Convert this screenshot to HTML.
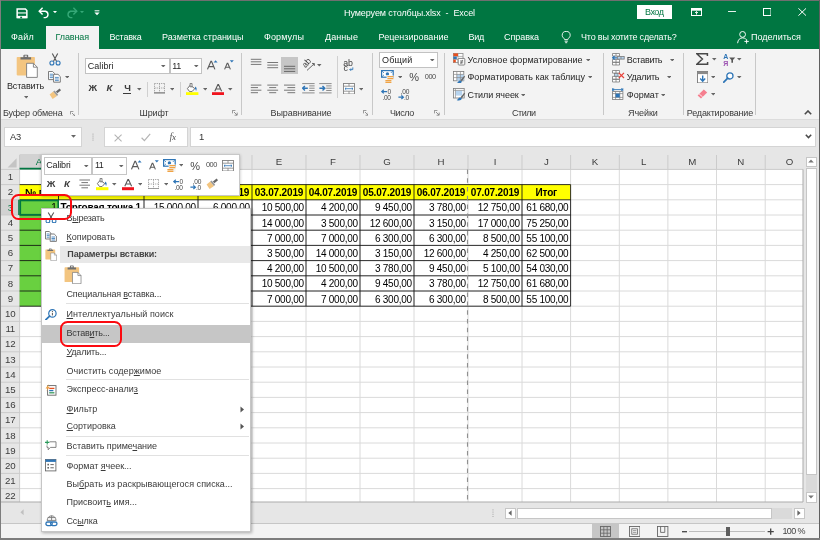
<!DOCTYPE html>
<html lang="ru"><head><meta charset="utf-8"><title>Нумеруем столбцы.xlsx - Excel</title>
<style>
html,body{margin:0;padding:0}
body{width:820px;height:540px;overflow:hidden;position:relative;background:#e6e6e6;font-family:"Liberation Sans","DejaVu Sans",sans-serif;font-size:9px}
div,span,svg{position:absolute;display:block;box-sizing:border-box}
span{white-space:nowrap}
u{text-decoration:underline;text-underline-offset:1px}
#wrap{left:0;top:0;width:820px;height:540px;will-change:transform}
</style></head><body><div id="wrap">
<div style="left:0px;top:0px;width:820px;height:49px;background:#007641;"></div>
<span style="top:6.67px;font-size:9px;color:#fff;line-height:12px;left:344px;letter-spacing:-0.085px;">Нумеруем столбцы.xlsx<i style="font-style:normal;word-spacing:2.5px"> - </i>Excel</span>
<div style="left:636.5px;top:4.5px;width:35.5px;height:14.5px;background:#fff;"></div>
<span style="top:5.57px;font-size:9px;color:#007641;line-height:12px;left:645px;letter-spacing:-0.465px;">Вход</span>
<div style="left:46px;top:26px;width:52.5px;height:23px;background:#f3f3f3;"></div>
<span style="top:31.17px;font-size:9px;color:#fff;line-height:12px;left:11px;letter-spacing:0.218px;">Файл</span>
<span style="top:31.17px;font-size:9px;color:#007641;line-height:12px;left:55.5px;letter-spacing:-0.108px;">Главная</span>
<span style="top:31.17px;font-size:9px;color:#fff;line-height:12px;left:109.5px;letter-spacing:-0.207px;">Вставка</span>
<span style="top:31.17px;font-size:9px;color:#fff;line-height:12px;left:162px;letter-spacing:-0.009px;">Разметка страницы</span>
<span style="top:31.17px;font-size:9px;color:#fff;line-height:12px;left:264px;letter-spacing:0.119px;">Формулы</span>
<span style="top:31.17px;font-size:9px;color:#fff;line-height:12px;left:325px;letter-spacing:0.081px;">Данные</span>
<span style="top:31.17px;font-size:9px;color:#fff;line-height:12px;left:378.5px;letter-spacing:0.036px;">Рецензирование</span>
<span style="top:31.17px;font-size:9px;color:#fff;line-height:12px;left:468.5px;letter-spacing:-0.261px;">Вид</span>
<span style="top:31.17px;font-size:9px;color:#fff;line-height:12px;left:504px;letter-spacing:-0.044px;">Справка</span>
<span style="top:31.17px;font-size:9px;color:#fff;line-height:12px;left:581px;letter-spacing:-0.182px;">Что вы хотите сделать?</span>
<span style="top:31.17px;font-size:9px;color:#fff;line-height:12px;left:751px;letter-spacing:0.030px;">Поделиться</span>
<div style="left:0px;top:49px;width:820px;height:70px;background:#f3f3f3;"></div>
<div style="left:0px;top:119px;width:820px;height:1px;background:#dcdcdc;"></div>
<div style="left:78px;top:52.5px;width:1px;height:62.5px;background:#c8c8c8;"></div>
<div style="left:241px;top:52.5px;width:1px;height:62.5px;background:#c8c8c8;"></div>
<div style="left:372px;top:52.5px;width:1px;height:62.5px;background:#c8c8c8;"></div>
<div style="left:443.8px;top:52.5px;width:1px;height:62.5px;background:#c8c8c8;"></div>
<div style="left:602.5px;top:52.5px;width:1px;height:62.5px;background:#c8c8c8;"></div>
<div style="left:682.9px;top:52.5px;width:1px;height:62.5px;background:#c8c8c8;"></div>
<div style="left:754.8px;top:52.5px;width:1px;height:62.5px;background:#c8c8c8;"></div>
<span style="top:106.67px;font-size:9px;color:#3a3a3a;line-height:12px;left:3px;letter-spacing:-0.138px;">Буфер обмена</span>
<span style="top:106.67px;font-size:9px;color:#3a3a3a;line-height:12px;left:139.5px;letter-spacing:-0.122px;">Шрифт</span>
<span style="top:106.67px;font-size:9px;color:#3a3a3a;line-height:12px;left:270.5px;letter-spacing:-0.079px;">Выравнивание</span>
<span style="top:106.67px;font-size:9px;color:#3a3a3a;line-height:12px;left:390px;letter-spacing:-0.427px;">Число</span>
<span style="top:106.67px;font-size:9px;color:#3a3a3a;line-height:12px;left:512px;letter-spacing:-0.486px;">Стили</span>
<span style="top:106.67px;font-size:9px;color:#3a3a3a;line-height:12px;left:628px;letter-spacing:-0.064px;">Ячейки</span>
<span style="top:106.67px;font-size:9px;color:#3a3a3a;line-height:12px;left:686.8px;letter-spacing:-0.169px;">Редактирование</span>
<span style="top:79.67px;font-size:9px;color:#262626;line-height:12px;left:7px;letter-spacing:-0.144px;">Вставить</span>
<div style="left:85px;top:57.5px;width:85px;height:16.5px;background:#fff;border:1px solid #c2c2c2;"></div>
<div style="left:169.5px;top:57.5px;width:32.5px;height:16.5px;background:#fff;border:1px solid #c2c2c2;"></div>
<span style="top:59.87px;font-size:9px;color:#262626;line-height:12px;left:87.8px;letter-spacing:0.028px;">Calibri</span>
<span style="top:59.87px;font-size:9px;color:#262626;line-height:12px;left:172.3px;letter-spacing:-0.472px;">11</span>
<div style="left:379.2px;top:51.5px;width:59.3px;height:16.5px;background:#fff;border:1px solid #c2c2c2;"></div>
<span style="top:53.87px;font-size:9px;color:#262626;line-height:12px;left:382px;letter-spacing:0.177px;">Общий</span>
<span style="top:53.67px;font-size:9px;color:#262626;line-height:12px;left:467.5px;letter-spacing:0.022px;">Условное форматирование</span>
<span style="top:70.97px;font-size:9px;color:#262626;line-height:12px;left:467.5px;letter-spacing:0.016px;">Форматировать как таблицу</span>
<span style="top:88.67px;font-size:9px;color:#262626;line-height:12px;left:467.5px;letter-spacing:-0.063px;">Стили ячеек</span>
<span style="top:53.67px;font-size:9px;color:#262626;line-height:12px;left:626.8px;letter-spacing:-0.344px;">Вставить</span>
<span style="top:70.97px;font-size:9px;color:#262626;line-height:12px;left:626.8px;letter-spacing:-0.280px;">Удалить</span>
<span style="top:88.67px;font-size:9px;color:#262626;line-height:12px;left:626.8px;letter-spacing:0.005px;">Формат</span>
<div style="left:4px;top:127px;width:77.5px;height:19.5px;background:#fff;border:1px solid #d4d4d4;"></div>
<span style="top:131.16px;font-size:9.3px;color:#333;line-height:12px;left:10px;letter-spacing:-0.088px;">A3</span>
<div style="left:104px;top:127px;width:83.5px;height:19.5px;background:#fff;border:1px solid #d4d4d4;"></div>
<div style="left:190px;top:127px;width:625.5px;height:19.5px;background:#fff;border:1px solid #d4d4d4;"></div>
<span style="top:131.15px;font-size:9.5px;color:#333;line-height:12px;left:101.6px;width:200px;text-align:center;">1</span>
<svg style="left:0;top:0" width="820" height="540" viewBox="0 0 820 540"><rect x="1" y="154" width="802" height="15.400000000000006" fill="#e6e6e6"/><rect x="1" y="169.4" width="18.6" height="332.6" fill="#e6e6e6"/><rect x="19.6" y="154" width="38.9" height="15.400000000000006" fill="#d2d2d2"/><rect x="1" y="199.8" width="18.6" height="15.2" fill="#d2d2d2"/><rect x="19.6" y="169.4" width="783.4" height="332.6" fill="#fff"/><path d="M16.6 158.2V167.4H7.6Z" fill="#c4c4c4"/><path d="M19.6 184.60H803 M19.6 199.80H803 M19.6 215.00H803 M19.6 230.20H803 M19.6 245.40H803 M19.6 260.60H803 M19.6 275.80H803 M19.6 291.00H803 M19.6 306.20H803 M19.6 321.40H803 M19.6 336.60H803 M19.6 351.80H803 M19.6 367.00H803 M19.6 382.20H803 M19.6 397.40H803 M19.6 412.60H803 M19.6 427.80H803 M19.6 443.00H803 M19.6 458.20H803 M19.6 473.40H803 M19.6 488.60H803 M58.5 169.4V502 M144 169.4V502 M198 169.4V502 M252 169.4V502 M306 169.4V502 M360 169.4V502 M414 169.4V502 M468 169.4V502 M522 169.4V502 M570.6 169.4V502 M619.3 169.4V502 M667.9 169.4V502 M716.5 169.4V502 M765.2 169.4V502" stroke="#dadada" stroke-width="1" fill="none"/><path d="M19.6 155V169.4 M58.5 155V169.4 M144 155V169.4 M198 155V169.4 M252 155V169.4 M306 155V169.4 M360 155V169.4 M414 155V169.4 M468 155V169.4 M522 155V169.4 M570.6 155V169.4 M619.3 155V169.4 M667.9 155V169.4 M716.5 155V169.4 M765.2 155V169.4 M1 169.40H19.6 M1 184.60H19.6 M1 199.80H19.6 M1 215.00H19.6 M1 230.20H19.6 M1 245.40H19.6 M1 260.60H19.6 M1 275.80H19.6 M1 291.00H19.6 M1 306.20H19.6 M1 321.40H19.6 M1 336.60H19.6 M1 351.80H19.6 M1 367.00H19.6 M1 382.20H19.6 M1 397.40H19.6 M1 412.60H19.6 M1 427.80H19.6 M1 443.00H19.6 M1 458.20H19.6 M1 473.40H19.6 M1 488.60H19.6 M19.6 169.4V502 M19.6 169.4H803" stroke="#cbcbcb" stroke-width="1" fill="none"/><path d="M803 169.4V502H1" stroke="#ababab" stroke-width="1" fill="none"/><rect x="19.6" y="184.6" width="551.0" height="15.2" fill="#ffff00"/><rect x="19.6" y="199.8" width="38.9" height="106.39999999999998" fill="#69d040"/><path d="M19.6 184.60H570.6 M19.6 199.80H570.6 M19.6 215.00H570.6 M19.6 230.20H570.6 M19.6 245.40H570.6 M19.6 260.60H570.6 M19.6 275.80H570.6 M19.6 291.00H570.6 M19.6 306.20H570.6 M58.5 184.6V306.2 M144 184.6V306.2 M198 184.6V306.2 M252 184.6V306.2 M306 184.6V306.2 M360 184.6V306.2 M414 184.6V306.2 M522 184.6V306.2 M570.6 184.6V306.2" stroke="#111" stroke-width="0.85" fill="none"/><path d="M467.5 169.4V502" stroke="#909090" stroke-width="1.1" stroke-dasharray="4.5 4.3" fill="none"/><path d="M19.6 168.6H58.5" stroke="#007641" stroke-width="1.6"/><path d="M18.9 199.8V215.0" stroke="#007641" stroke-width="1.4"/><rect x="20.3" y="200.5" width="37.9" height="14.2" fill="none" stroke="#007641" stroke-width="1.6"/></svg>
<span style="top:155.85px;font-size:9.7px;color:#007641;line-height:12px;left:-60.95px;width:200px;text-align:center;">A</span>
<span style="top:155.85px;font-size:9.7px;color:#3c3c3c;line-height:12px;left:1.25px;width:200px;text-align:center;">B</span>
<span style="top:155.85px;font-size:9.7px;color:#3c3c3c;line-height:12px;left:71px;width:200px;text-align:center;">C</span>
<span style="top:155.85px;font-size:9.7px;color:#3c3c3c;line-height:12px;left:125px;width:200px;text-align:center;">D</span>
<span style="top:155.85px;font-size:9.7px;color:#3c3c3c;line-height:12px;left:179px;width:200px;text-align:center;">E</span>
<span style="top:155.85px;font-size:9.7px;color:#3c3c3c;line-height:12px;left:233px;width:200px;text-align:center;">F</span>
<span style="top:155.85px;font-size:9.7px;color:#3c3c3c;line-height:12px;left:287px;width:200px;text-align:center;">G</span>
<span style="top:155.85px;font-size:9.7px;color:#3c3c3c;line-height:12px;left:341px;width:200px;text-align:center;">H</span>
<span style="top:155.85px;font-size:9.7px;color:#3c3c3c;line-height:12px;left:395px;width:200px;text-align:center;">I</span>
<span style="top:155.85px;font-size:9.7px;color:#3c3c3c;line-height:12px;left:446.3px;width:200px;text-align:center;">J</span>
<span style="top:155.85px;font-size:9.7px;color:#3c3c3c;line-height:12px;left:494.95px;width:200px;text-align:center;">K</span>
<span style="top:155.85px;font-size:9.7px;color:#3c3c3c;line-height:12px;left:543.6px;width:200px;text-align:center;">L</span>
<span style="top:155.85px;font-size:9.7px;color:#3c3c3c;line-height:12px;left:592.2px;width:200px;text-align:center;">M</span>
<span style="top:155.85px;font-size:9.7px;color:#3c3c3c;line-height:12px;left:640.85px;width:200px;text-align:center;">N</span>
<span style="top:155.85px;font-size:9.7px;color:#3c3c3c;line-height:12px;left:689.6px;width:200px;text-align:center;">O</span>
<span style="top:171.25px;font-size:9.7px;color:#3c3c3c;line-height:12px;left:-89.8px;width:200px;text-align:center;letter-spacing:-0.3px;">1</span>
<span style="top:186.45px;font-size:9.7px;color:#3c3c3c;line-height:12px;left:-89.8px;width:200px;text-align:center;letter-spacing:-0.3px;">2</span>
<span style="top:201.65px;font-size:9.7px;color:#007641;line-height:12px;left:-89.8px;width:200px;text-align:center;letter-spacing:-0.3px;">3</span>
<span style="top:216.85px;font-size:9.7px;color:#3c3c3c;line-height:12px;left:-89.8px;width:200px;text-align:center;letter-spacing:-0.3px;">4</span>
<span style="top:232.05px;font-size:9.7px;color:#3c3c3c;line-height:12px;left:-89.8px;width:200px;text-align:center;letter-spacing:-0.3px;">5</span>
<span style="top:247.25px;font-size:9.7px;color:#3c3c3c;line-height:12px;left:-89.8px;width:200px;text-align:center;letter-spacing:-0.3px;">6</span>
<span style="top:262.45px;font-size:9.7px;color:#3c3c3c;line-height:12px;left:-89.8px;width:200px;text-align:center;letter-spacing:-0.3px;">7</span>
<span style="top:277.65px;font-size:9.7px;color:#3c3c3c;line-height:12px;left:-89.8px;width:200px;text-align:center;letter-spacing:-0.3px;">8</span>
<span style="top:292.85px;font-size:9.7px;color:#3c3c3c;line-height:12px;left:-89.8px;width:200px;text-align:center;letter-spacing:-0.3px;">9</span>
<span style="top:308.05px;font-size:9.7px;color:#3c3c3c;line-height:12px;left:-89.8px;width:200px;text-align:center;letter-spacing:-0.3px;">10</span>
<span style="top:323.25px;font-size:9.7px;color:#3c3c3c;line-height:12px;left:-89.8px;width:200px;text-align:center;letter-spacing:-0.3px;">11</span>
<span style="top:338.45px;font-size:9.7px;color:#3c3c3c;line-height:12px;left:-89.8px;width:200px;text-align:center;letter-spacing:-0.3px;">12</span>
<span style="top:353.65px;font-size:9.7px;color:#3c3c3c;line-height:12px;left:-89.8px;width:200px;text-align:center;letter-spacing:-0.3px;">13</span>
<span style="top:368.85px;font-size:9.7px;color:#3c3c3c;line-height:12px;left:-89.8px;width:200px;text-align:center;letter-spacing:-0.3px;">14</span>
<span style="top:384.05px;font-size:9.7px;color:#3c3c3c;line-height:12px;left:-89.8px;width:200px;text-align:center;letter-spacing:-0.3px;">15</span>
<span style="top:399.25px;font-size:9.7px;color:#3c3c3c;line-height:12px;left:-89.8px;width:200px;text-align:center;letter-spacing:-0.3px;">16</span>
<span style="top:414.45px;font-size:9.7px;color:#3c3c3c;line-height:12px;left:-89.8px;width:200px;text-align:center;letter-spacing:-0.3px;">17</span>
<span style="top:429.65px;font-size:9.7px;color:#3c3c3c;line-height:12px;left:-89.8px;width:200px;text-align:center;letter-spacing:-0.3px;">18</span>
<span style="top:444.85px;font-size:9.7px;color:#3c3c3c;line-height:12px;left:-89.8px;width:200px;text-align:center;letter-spacing:-0.3px;">19</span>
<span style="top:460.05px;font-size:9.7px;color:#3c3c3c;line-height:12px;left:-89.8px;width:200px;text-align:center;letter-spacing:-0.3px;">20</span>
<span style="top:475.25px;font-size:9.7px;color:#3c3c3c;line-height:12px;left:-89.8px;width:200px;text-align:center;letter-spacing:-0.3px;">21</span>
<span style="top:490.45px;font-size:9.7px;color:#3c3c3c;line-height:12px;left:-89.8px;width:200px;text-align:center;letter-spacing:-0.3px;">22</span>
<span style="top:186.83px;font-size:10px;color:#000;line-height:12px;font-weight:bold;left:254.726px;letter-spacing:-0.150px;">03.07.2019</span>
<span style="top:186.83px;font-size:10px;color:#000;line-height:12px;font-weight:bold;left:308.726px;letter-spacing:-0.150px;">04.07.2019</span>
<span style="top:186.83px;font-size:10px;color:#000;line-height:12px;font-weight:bold;left:362.726px;letter-spacing:-0.150px;">05.07.2019</span>
<span style="top:186.83px;font-size:10px;color:#000;line-height:12px;font-weight:bold;left:416.726px;letter-spacing:-0.150px;">06.07.2019</span>
<span style="top:186.83px;font-size:10px;color:#000;line-height:12px;font-weight:bold;left:470.726px;letter-spacing:-0.150px;">07.07.2019</span>
<span style="top:186.83px;font-size:10px;color:#000;line-height:12px;font-weight:bold;left:535.52px;letter-spacing:-0.167px;">Итог</span>
<span style="top:202.44px;font-size:10px;color:#000;line-height:12px;left:261.759px;letter-spacing:-0.272px;">10 500,00</span>
<span style="top:202.44px;font-size:10px;color:#000;line-height:12px;left:321.014px;letter-spacing:-0.268px;">4 200,00</span>
<span style="top:202.44px;font-size:10px;color:#000;line-height:12px;left:375.014px;letter-spacing:-0.268px;">9 450,00</span>
<span style="top:202.44px;font-size:10px;color:#000;line-height:12px;left:429.014px;letter-spacing:-0.268px;">3 780,00</span>
<span style="top:202.44px;font-size:10px;color:#000;line-height:12px;left:477.759px;letter-spacing:-0.272px;">12 750,00</span>
<span style="top:202.44px;font-size:10px;color:#000;line-height:12px;left:526.359px;letter-spacing:-0.272px;">61 680,00</span>
<span style="top:217.63px;font-size:10px;color:#000;line-height:12px;left:261.759px;letter-spacing:-0.272px;">14 000,00</span>
<span style="top:217.63px;font-size:10px;color:#000;line-height:12px;left:321.014px;letter-spacing:-0.268px;">3 500,00</span>
<span style="top:217.63px;font-size:10px;color:#000;line-height:12px;left:369.759px;letter-spacing:-0.272px;">12 600,00</span>
<span style="top:217.63px;font-size:10px;color:#000;line-height:12px;left:429.014px;letter-spacing:-0.268px;">3 150,00</span>
<span style="top:217.63px;font-size:10px;color:#000;line-height:12px;left:477.759px;letter-spacing:-0.272px;">17 000,00</span>
<span style="top:217.63px;font-size:10px;color:#000;line-height:12px;left:526.359px;letter-spacing:-0.272px;">75 250,00</span>
<span style="top:232.83px;font-size:10px;color:#000;line-height:12px;left:267.014px;letter-spacing:-0.268px;">7 000,00</span>
<span style="top:232.83px;font-size:10px;color:#000;line-height:12px;left:321.014px;letter-spacing:-0.268px;">7 000,00</span>
<span style="top:232.83px;font-size:10px;color:#000;line-height:12px;left:375.014px;letter-spacing:-0.268px;">6 300,00</span>
<span style="top:232.83px;font-size:10px;color:#000;line-height:12px;left:429.014px;letter-spacing:-0.268px;">6 300,00</span>
<span style="top:232.83px;font-size:10px;color:#000;line-height:12px;left:483.014px;letter-spacing:-0.268px;">8 500,00</span>
<span style="top:232.83px;font-size:10px;color:#000;line-height:12px;left:526.359px;letter-spacing:-0.272px;">55 100,00</span>
<span style="top:248.03px;font-size:10px;color:#000;line-height:12px;left:267.014px;letter-spacing:-0.268px;">3 500,00</span>
<span style="top:248.03px;font-size:10px;color:#000;line-height:12px;left:315.759px;letter-spacing:-0.272px;">14 000,00</span>
<span style="top:248.03px;font-size:10px;color:#000;line-height:12px;left:375.014px;letter-spacing:-0.268px;">3 150,00</span>
<span style="top:248.03px;font-size:10px;color:#000;line-height:12px;left:423.759px;letter-spacing:-0.272px;">12 600,00</span>
<span style="top:248.03px;font-size:10px;color:#000;line-height:12px;left:483.014px;letter-spacing:-0.268px;">4 250,00</span>
<span style="top:248.03px;font-size:10px;color:#000;line-height:12px;left:526.359px;letter-spacing:-0.272px;">62 500,00</span>
<span style="top:263.24px;font-size:10px;color:#000;line-height:12px;left:267.014px;letter-spacing:-0.268px;">4 200,00</span>
<span style="top:263.24px;font-size:10px;color:#000;line-height:12px;left:315.759px;letter-spacing:-0.272px;">10 500,00</span>
<span style="top:263.24px;font-size:10px;color:#000;line-height:12px;left:375.014px;letter-spacing:-0.268px;">3 780,00</span>
<span style="top:263.24px;font-size:10px;color:#000;line-height:12px;left:429.014px;letter-spacing:-0.268px;">9 450,00</span>
<span style="top:263.24px;font-size:10px;color:#000;line-height:12px;left:483.014px;letter-spacing:-0.268px;">5 100,00</span>
<span style="top:263.24px;font-size:10px;color:#000;line-height:12px;left:526.359px;letter-spacing:-0.272px;">54 030,00</span>
<span style="top:278.44px;font-size:10px;color:#000;line-height:12px;left:261.759px;letter-spacing:-0.272px;">10 500,00</span>
<span style="top:278.44px;font-size:10px;color:#000;line-height:12px;left:321.014px;letter-spacing:-0.268px;">4 200,00</span>
<span style="top:278.44px;font-size:10px;color:#000;line-height:12px;left:375.014px;letter-spacing:-0.268px;">9 450,00</span>
<span style="top:278.44px;font-size:10px;color:#000;line-height:12px;left:429.014px;letter-spacing:-0.268px;">3 780,00</span>
<span style="top:278.44px;font-size:10px;color:#000;line-height:12px;left:477.759px;letter-spacing:-0.272px;">12 750,00</span>
<span style="top:278.44px;font-size:10px;color:#000;line-height:12px;left:526.359px;letter-spacing:-0.272px;">61 680,00</span>
<span style="top:293.63px;font-size:10px;color:#000;line-height:12px;left:267.014px;letter-spacing:-0.268px;">7 000,00</span>
<span style="top:293.63px;font-size:10px;color:#000;line-height:12px;left:321.014px;letter-spacing:-0.268px;">7 000,00</span>
<span style="top:293.63px;font-size:10px;color:#000;line-height:12px;left:375.014px;letter-spacing:-0.268px;">6 300,00</span>
<span style="top:293.63px;font-size:10px;color:#000;line-height:12px;left:429.014px;letter-spacing:-0.268px;">6 300,00</span>
<span style="top:293.63px;font-size:10px;color:#000;line-height:12px;left:483.014px;letter-spacing:-0.268px;">8 500,00</span>
<span style="top:293.63px;font-size:10px;color:#000;line-height:12px;left:526.359px;letter-spacing:-0.272px;">55 100,00</span>
<span style="top:186.83px;font-size:10px;color:#000;line-height:12px;font-weight:bold;left:25.09px;letter-spacing:-0.173px;">№ п/п</span>
<span style="top:186.83px;font-size:10px;color:#000;line-height:12px;font-weight:bold;left:65.6677px;letter-spacing:-0.183px;">Наименование</span>
<span style="top:186.83px;font-size:10px;color:#000;line-height:12px;font-weight:bold;left:146.726px;letter-spacing:-0.150px;">01.07.2019</span>
<span style="top:186.83px;font-size:10px;color:#000;line-height:12px;font-weight:bold;left:200.726px;letter-spacing:-0.150px;">02.07.2019</span>
<span style="top:202.44px;font-size:10px;color:#000;line-height:12px;left:51.2442px;letter-spacing:-0.306px;">1</span>
<span style="top:202.23px;font-size:10px;color:#000;line-height:12px;font-weight:bold;left:60.5px;letter-spacing:-0.179px;">Торговая точка 1</span>
<span style="top:202.44px;font-size:10px;color:#000;line-height:12px;left:153.759px;letter-spacing:-0.272px;">15 000,00</span>
<span style="top:202.44px;font-size:10px;color:#000;line-height:12px;left:213.014px;letter-spacing:-0.268px;">6 000,00</span>
<div style="left:805.5px;top:156.5px;width:11px;height:10px;background:#fff;border:1px solid #c6c6c6;"></div>
<div style="left:805.5px;top:167.5px;width:11px;height:307.5px;background:#fff;border:1px solid #c6c6c6;"></div>
<div style="left:805.5px;top:475px;width:11px;height:17px;background:#dadada;"></div>
<div style="left:805.5px;top:492px;width:11px;height:10.5px;background:#fff;border:1px solid #c6c6c6;"></div>
<div style="left:505px;top:507.5px;width:10.5px;height:11px;background:#fff;border:1px solid #c6c6c6;"></div>
<div style="left:516.5px;top:507.5px;width:255px;height:11px;background:#fff;border:1px solid #c6c6c6;"></div>
<div style="left:771.5px;top:507.5px;width:20.5px;height:11px;background:#dadada;"></div>
<div style="left:793.5px;top:507.5px;width:11px;height:11px;background:#fff;border:1px solid #c6c6c6;"></div>
<div style="left:0px;top:523px;width:820px;height:1px;background:#c6c6c6;"></div>
<div style="left:0px;top:524px;width:820px;height:16px;background:#f3f3f3;"></div>
<div style="left:591.7px;top:524px;width:27.8px;height:14px;background:#c6c6c6;"></div>
<span style="top:524.87px;font-size:9px;color:#444;line-height:12px;left:782.5px;letter-spacing:-0.644px;">100 %</span>
<div style="left:689px;top:531.2px;width:76px;height:1px;background:#bcbcbc;"></div>
<div style="left:725.7px;top:526.6px;width:4px;height:9.6px;background:#5e5e5e;"></div>
<svg style="left:680.6px;top:528px;" width="7" height="7" viewBox="0 0 7 7"><path d="M1 3.7H6" stroke="#444" stroke-width="1.3"/></svg>
<svg style="left:766.8px;top:528px;" width="7.4" height="7.4" viewBox="0 0 7.4 7.4"><path d="M0.6 3.7H6.8M3.7 0.6V6.8" stroke="#444" stroke-width="1.3"/></svg>
<svg style="left:599.6px;top:525.6px;" width="11" height="11" viewBox="0 0 11 11"><rect x="0.5" y="0.5" width="10" height="10" fill="none" stroke="#666" stroke-width="0.9"/><path d="M0.5 3.8H10.5M0.5 7.2H10.5M3.8 0.5V10.5M7.2 0.5V10.5" stroke="#666" stroke-width="0.8"/></svg>
<svg style="left:629px;top:525.6px;" width="11.4" height="11" viewBox="0 0 11.4 11"><rect x="0.5" y="0.5" width="10.4" height="10" fill="none" stroke="#666" stroke-width="0.9"/><rect x="2.8" y="2.8" width="5.8" height="5.4" fill="none" stroke="#666" stroke-width="0.8"/><path d="M4 4.6H7.4M4 6.4H7.4" stroke="#777" stroke-width="0.7"/></svg>
<svg style="left:657.4px;top:525.6px;" width="11.4" height="11" viewBox="0 0 11.4 11"><rect x="0.5" y="0.5" width="10.4" height="10" fill="none" stroke="#666" stroke-width="0.9"/><path d="M3.6 0.5V6.4H7.8V0.5" fill="none" stroke="#666" stroke-width="0.9"/></svg>
<div style="left:41px;top:153.5px;width:198.5px;height:42.3px;background:#fff;border:1px solid #c8c8c8;box-shadow:0 1px 3px rgba(0,0,0,.25);"></div>
<div style="left:43.5px;top:157px;width:48px;height:17.5px;background:#fff;border:1px solid #c6c6c6;"></div>
<div style="left:92px;top:157px;width:34.5px;height:17.5px;background:#fff;border:1px solid #c6c6c6;"></div>
<span style="top:159.27px;font-size:9px;color:#262626;line-height:12px;left:46.2px;letter-spacing:-0.158px;">Calibri</span>
<span style="top:159.27px;font-size:9px;color:#262626;line-height:12px;left:95px;letter-spacing:-0.672px;">11</span>
<div style="left:41px;top:208px;width:209.5px;height:323.5px;background:#fff;border:1px solid #c6c6c6;box-shadow:1px 1px 3px rgba(0,0,0,.3);"></div>
<div style="left:60px;top:246px;width:189.5px;height:16.5px;background:#e8e8e8;"></div>
<div style="left:42px;top:325px;width:207.5px;height:17.5px;background:#c6c6c6;"></div>
<div style="left:66px;top:303.3px;width:183px;height:1px;background:#e1e1e1;"></div>
<div style="left:66px;top:378.5px;width:183px;height:1px;background:#e1e1e1;"></div>
<div style="left:66px;top:435.7px;width:183px;height:1px;background:#e1e1e1;"></div>
<div style="left:66px;top:455.4px;width:183px;height:1px;background:#e1e1e1;"></div>
<span style="top:211.97px;font-size:9px;color:#3a3a3a;line-height:12px;left:66.5px;letter-spacing:-0.279px;">В<u>ы</u>резать</span>
<span style="top:230.67px;font-size:9px;color:#3a3a3a;line-height:12px;left:66.5px;letter-spacing:0.004px;"><u>К</u>опировать</span>
<span style="top:247.97px;font-size:9px;color:#444;line-height:12px;font-weight:bold;left:67.3px;letter-spacing:-0.123px;">Параметры вставки:</span>
<span style="top:288.27px;font-size:9px;color:#3a3a3a;line-height:12px;left:66.5px;letter-spacing:-0.168px;">Специальная <u>в</u>ставка...</span>
<span style="top:307.87px;font-size:9px;color:#3a3a3a;line-height:12px;left:66.5px;letter-spacing:0.068px;"><u>И</u>нтеллектуальный поиск</span>
<span style="top:326.87px;font-size:9px;color:#3a3a3a;line-height:12px;left:66.5px;letter-spacing:-0.250px;">Встав<u>и</u>ть...</span>
<span style="top:345.97px;font-size:9px;color:#3a3a3a;line-height:12px;left:66.5px;letter-spacing:-0.206px;"><u>У</u>далить...</span>
<span style="top:364.67px;font-size:9px;color:#3a3a3a;line-height:12px;left:66.5px;letter-spacing:0.063px;">Очистить содер<u>ж</u>имое</span>
<span style="top:382.97px;font-size:9px;color:#3a3a3a;line-height:12px;left:66.5px;letter-spacing:0.015px;">Экспресс-анали<u>з</u></span>
<span style="top:402.67px;font-size:9px;color:#3a3a3a;line-height:12px;left:66.5px;letter-spacing:0.094px;"><u>Ф</u>ильтр</span>
<span style="top:420.27px;font-size:9px;color:#3a3a3a;line-height:12px;left:66.5px;letter-spacing:-0.010px;"><u>С</u>ортировка</span>
<span style="top:440.27px;font-size:9px;color:#3a3a3a;line-height:12px;left:66.5px;letter-spacing:-0.034px;">Вставить приме<u>ч</u>ание</span>
<span style="top:460.17px;font-size:9px;color:#3a3a3a;line-height:12px;left:66.5px;letter-spacing:-0.032px;">Формат <u>я</u>чеек...</span>
<span style="top:478.17px;font-size:9px;color:#3a3a3a;line-height:12px;left:66.5px;letter-spacing:0.039px;">Вы<u>б</u>рать из раскрывающегося списка...</span>
<span style="top:496.37px;font-size:9px;color:#3a3a3a;line-height:12px;left:66.5px;letter-spacing:-0.007px;">Присвоит<u>ь</u> имя...</span>
<span style="top:514.67px;font-size:9px;color:#3a3a3a;line-height:12px;left:66.5px;letter-spacing:-0.127px;">Сс<u>ы</u>лка</span>
<svg style="left:239.5px;top:405.5px" width="5" height="7" viewBox="0 0 5 7"><path d="M0.5 0.5L4 3.5L0.5 6.5Z" fill="#555"/></svg>
<svg style="left:239.5px;top:423.1px" width="5" height="7" viewBox="0 0 5 7"><path d="M0.5 0.5L4 3.5L0.5 6.5Z" fill="#555"/></svg>
<svg style="left:16px;top:7.5px;" width="12" height="11" viewBox="0 0 12 11"><path d="M1.15 1.05H9.4L10.85 2.5V9.5H1.15Z" fill="none" stroke="#fff" stroke-width="1.5"/><rect x="1.2" y="4.4" width="9.6" height="1.1" fill="#fff"/><rect x="1.2" y="7.9" width="9.6" height="2.3" fill="#fff"/><rect x="4.2" y="8.7" width="1.9" height="1.6" fill="#007641"/></svg>
<svg style="left:38px;top:7px;" width="13" height="11.5" viewBox="0 0 13 11.5"><path d="M1.2 4.2H7.4A3.4 3.3 0 0 1 7.4 10.6H5.6" fill="none" stroke="#fff" stroke-width="1.4"/><path d="M4.6 0.8L1.2 4.2L4.6 7.6" fill="none" stroke="#fff" stroke-width="1.4"/></svg>
<svg style="left:53px;top:11.18px" width="4" height="2.24" viewBox="0 0 5 2.8"><path d="M0 0H5L2.5 2.8Z" fill="#fff"/></svg>
<svg style="left:64.5px;top:7px;" width="13" height="11.5" viewBox="0 0 13 11.5"><path d="M11.8 4.2H5.6A3.4 3.3 0 0 0 5.6 10.6H7.4" fill="none" stroke="#35a877" stroke-width="1.4"/><path d="M8.4 0.8L11.8 4.2L8.4 7.6" fill="none" stroke="#35a877" stroke-width="1.4"/></svg>
<svg style="left:79.6px;top:11.18px" width="4" height="2.24" viewBox="0 0 5 2.8"><path d="M0 0H5L2.5 2.8Z" fill="#35a877"/></svg>
<svg style="left:94px;top:10px;" width="6" height="5.5" viewBox="0 0 6 5.5"><rect x="0.6" y="0.3" width="4.8" height="1" fill="#fff"/><path d="M0.4 2.4H5.6L3 5.2Z" fill="#fff"/></svg>
<svg style="left:691px;top:7.5px;" width="11" height="8" viewBox="0 0 11 8"><rect x="0.5" y="0.5" width="10" height="7" fill="none" stroke="#fff" stroke-width="1"/><rect x="0.5" y="0.5" width="10" height="2.2" fill="#fff"/><path d="M5.5 3.6V6.6M4 5L5.5 3.6L7 5" stroke="#fff" stroke-width="0.9" fill="none"/></svg>
<svg style="left:728px;top:11.2px;" width="8" height="1.2" viewBox="0 0 8 1.2"><rect x="0" y="0.1" width="8" height="1" fill="#fff"/></svg>
<svg style="left:762.5px;top:7.5px;" width="8.5" height="8" viewBox="0 0 8.5 8"><rect x="0.5" y="0.5" width="7.5" height="7" fill="none" stroke="#fff" stroke-width="1"/></svg>
<svg style="left:797.5px;top:7.5px;" width="8.5" height="8" viewBox="0 0 8.5 8"><path d="M0.4 0.3L8.1 7.7M8.1 0.3L0.4 7.7" stroke="#fff" stroke-width="1"/></svg>
<svg style="left:560.5px;top:31px;" width="10.5" height="12.5" viewBox="0 0 10.5 12.5"><path d="M3.6 8.6C3.6 7.3 1.2 6.6 1.2 4.4A4 4 0 0 1 9.2 4.4C9.2 6.6 6.8 7.3 6.8 8.6Z" fill="none" stroke="#fff" stroke-width="0.9"/><path d="M3.6 10.2H6.8M4.2 11.7H6.2" stroke="#fff" stroke-width="0.9"/></svg>
<svg style="left:736.5px;top:30.8px;" width="12" height="13" viewBox="0 0 12 13"><circle cx="5.6" cy="3.4" r="2.9" fill="none" stroke="#fff" stroke-width="0.95"/><path d="M0.6 12.2C0.9 8.6 3 6.9 5.6 6.9C7 6.9 8 7.3 8.8 8" fill="none" stroke="#fff" stroke-width="0.95"/><path d="M9.6 8.2V12.6M7.4 10.4H11.8" stroke="#fff" stroke-width="0.95"/></svg>
<svg style="left:16px;top:53.9px;" width="22" height="24" viewBox="0 0 22 24"><g transform="scale(1.0)"><rect x="0.7" y="2.9" width="18.2" height="18.5" rx="0.8" fill="#f3c580"/><path d="M4.5 5.6V3.2H7.4V1.6A0.9 0.9 0 0 1 8.3 0.7H11.3A0.9 0.9 0 0 1 12.2 1.6V3.2H15.1V5.6Z" fill="#6e6e6e"/><rect x="8.7" y="1.6" width="2.2" height="1.2" fill="#f3f3f3"/><path d="M10.6 9.3H17.4L21.3 13.2V23.4H10.6Z" fill="#fff" stroke="#7a7a7a" stroke-width="0.9"/><path d="M17.4 9.3V13.2H21.3" fill="none" stroke="#7a7a7a" stroke-width="0.9"/></g></svg>
<svg style="left:23.75px;top:96.04px" width="4.5" height="2.52" viewBox="0 0 5 2.8"><path d="M0 0H5L2.5 2.8Z" fill="#666"/></svg>
<svg style="left:48.8px;top:53px;" width="12" height="12.6" viewBox="0 0 12 12.6"><path d="M3.3 0.6L7.6 8.4M8.7 0.6L4.4 8.4" stroke="#555" stroke-width="1.1" fill="none"/><circle cx="2.9" cy="10" r="2" fill="none" stroke="#2e75b6" stroke-width="1.1"/><circle cx="9.1" cy="10" r="2" fill="none" stroke="#2e75b6" stroke-width="1.1"/></svg>
<svg style="left:47.8px;top:71px;" width="13" height="11.8" viewBox="0 0 13 11.8"><path d="M0.5 0.5H4.6L6.4 2.3V8.6H0.5Z" fill="#fff" stroke="#6e6e6e" stroke-width="0.9"/><path d="M1.8 3.2H5M1.8 4.9H5M1.8 6.6H5" stroke="#2e75b6" stroke-width="0.8"/><path d="M5.6 3.3H10L12.3 5.6V11.2H5.6Z" fill="#fff" stroke="#6e6e6e" stroke-width="0.9"/><path d="M7 6.4H10.8M7 8H10.8M7 9.6H10.8" stroke="#2e75b6" stroke-width="0.8"/></svg>
<svg style="left:64.85px;top:75.74px" width="4.5" height="2.52" viewBox="0 0 5 2.8"><path d="M0 0H5L2.5 2.8Z" fill="#666"/></svg>
<svg style="left:49px;top:88.2px;" width="12.5" height="11.5" viewBox="0 0 12.5 11.5"><g transform="scale(1.0)"><path d="M0.6 6.6L4.2 3.6L8 8L3.6 11Z" fill="#f3c580"/><path d="M4.2 3.6L5.6 2.5L9.2 6.8L8 8Z" fill="#9a9a9a"/><path d="M6.9 3.6L10.6 0.6L12 2.2L8.4 5.3Z" fill="#666"/></g></svg>
<svg style="left:69.6px;top:110.5px;" width="5.6" height="5.6" viewBox="0 0 5.6 5.6"><path d="M0.4 3.4V0.4H3.4" fill="none" stroke="#777" stroke-width="0.8"/><path d="M2 2L5 5M5.2 2.6V5.2H2.6" fill="none" stroke="#777" stroke-width="0.8"/></svg>
<svg style="left:232.2px;top:110.1px;" width="5.6" height="5.6" viewBox="0 0 5.6 5.6"><path d="M0.4 3.4V0.4H3.4" fill="none" stroke="#777" stroke-width="0.8"/><path d="M2 2L5 5M5.2 2.6V5.2H2.6" fill="none" stroke="#777" stroke-width="0.8"/></svg>
<svg style="left:161.45px;top:64.64px" width="4.5" height="2.52" viewBox="0 0 5 2.8"><path d="M0 0H5L2.5 2.8Z" fill="#666"/></svg>
<svg style="left:194.25px;top:64.64px" width="4.5" height="2.52" viewBox="0 0 5 2.8"><path d="M0 0H5L2.5 2.8Z" fill="#666"/></svg>
<svg style="left:206.6px;top:60.4px;" width="11" height="10" viewBox="0 0 11 10"><g transform="scale(1.0)"><path d="M0.5 9.4L3.9 1.4H4.5L7.9 9.4M1.8 6.6H6.6" fill="none" stroke="#5a5a5a" stroke-width="1.15"/><path d="M6.6 2.6L8.6 0.2L10.6 2.6Z" fill="#2e75b6"/></g></svg>
<svg style="left:224px;top:60.4px;" width="11" height="10" viewBox="0 0 11 10"><g transform="scale(1.0)"><path d="M0.6 9.4L3.2 3.2H3.8L6.4 9.4M1.6 7.2H5.4" fill="none" stroke="#5a5a5a" stroke-width="1.1"/><path d="M5.8 0.2H9.8L7.8 2.6Z" fill="#2e75b6"/></g></svg>
<span style="top:82.45px;font-size:9.5px;color:#3b3b3b;line-height:12px;font-weight:bold;left:88.6px;letter-spacing:0.814px;">Ж</span>
<span style="top:82.45px;font-size:9.5px;color:#3b3b3b;line-height:12px;font-weight:bold;font-style:italic;left:106.6px;letter-spacing:0.560px;">К</span>
<span style="top:82.25px;font-size:9.5px;color:#3b3b3b;line-height:12px;font-weight:bold;left:124.2px;letter-spacing:-0.675px;">Ч</span>
<div style="left:123.2px;top:92.7px;width:8px;height:1px;background:#3b3b3b;"></div>
<svg style="left:137.05px;top:88.14px" width="4.5" height="2.52" viewBox="0 0 5 2.8"><path d="M0 0H5L2.5 2.8Z" fill="#666"/></svg>
<div style="left:147px;top:81.5px;width:1px;height:15.5px;background:#d0d0d0;"></div>
<svg style="left:153.8px;top:83.2px;" width="11" height="10.5" viewBox="0 0 11 10.5"><path d="M0.5 0.5H10.5M0.5 5H10.5M0.5 0.5V9.5M5.5 0.5V9.5M10.5 0.5V9.5" stroke="#9a9a9a" stroke-width="0.9" stroke-dasharray="1.2 1" fill="none"/><path d="M0 9.9H11" stroke="#666" stroke-width="1.1"/></svg>
<svg style="left:169.75px;top:88.14px" width="4.5" height="2.52" viewBox="0 0 5 2.8"><path d="M0 0H5L2.5 2.8Z" fill="#666"/></svg>
<div style="left:180.2px;top:81.5px;width:1px;height:15.5px;background:#d0d0d0;"></div>
<svg style="left:186px;top:82.8px;" width="13" height="12.5" viewBox="0 0 13 12.5"><path d="M4.2 2.2L8.8 5.6L6 8.6H3.6L1.4 5.6Z" fill="#fff" stroke="#5f5f5f" stroke-width="0.9"/><path d="M4.1 0.4V3.8H6V0.4Z" fill="#fff" stroke="#5f5f5f" stroke-width="0.8"/><path d="M9.4 3.6C10.9 4.6 11 6.6 10 8.2C9.8 6.8 9.4 6 8.8 5.6Z" fill="#2e75b6"/><rect x="0" y="9.2" width="12.4" height="3" fill="#ffff00"/></svg>
<svg style="left:202.55px;top:88.14px" width="4.5" height="2.52" viewBox="0 0 5 2.8"><path d="M0 0H5L2.5 2.8Z" fill="#666"/></svg>
<svg style="left:212px;top:83.8px;" width="12.4" height="11.5" viewBox="0 0 12.4 11.5"><path d="M2.8 7.2L5.9 0.5H6.5L9.6 7.2M4 5H8.4" fill="none" stroke="#5a5a5a" stroke-width="1.1"/><rect x="0" y="8.2" width="12.2" height="3" fill="#f0141e"/></svg>
<svg style="left:228.35px;top:88.14px" width="4.5" height="2.52" viewBox="0 0 5 2.8"><path d="M0 0H5L2.5 2.8Z" fill="#666"/></svg>
<div style="left:281.4px;top:57.2px;width:16.8px;height:17.3px;background:#c6c6c6;"></div>
<svg style="left:0;top:0" width="820" height="540" viewBox="0 0 820 540"><path d="M250.8 59.3H261.4 M250.8 61.8H261.4 M250.8 64.4H261.4" stroke="#777" stroke-width="1.0" fill="none"/></svg>
<svg style="left:0;top:0" width="820" height="540" viewBox="0 0 820 540"><path d="M267.3 62.5H278.1 M267.3 65.1H278.1 M267.3 67.7H278.1" stroke="#777" stroke-width="1.0" fill="none"/></svg>
<svg style="left:0;top:0" width="820" height="540" viewBox="0 0 820 540"><path d="M284 66.3H295.2 M284 68.8H295.2 M284 71.4H295.2" stroke="#666" stroke-width="1.0" fill="none"/></svg>
<svg style="left:0;top:0" width="820" height="540" viewBox="0 0 820 540"><path d="M250.8 85.1H261.4 M250.8 87.6H258 M250.8 90.2H261.4 M250.8 92.7H258" stroke="#777" stroke-width="1.0" fill="none"/></svg>
<svg style="left:0;top:0" width="820" height="540" viewBox="0 0 820 540"><path d="M267.3 85.1H278.1 M269.2 87.6H276.2 M267.3 90.2H278.1 M269.2 92.7H276.2" stroke="#777" stroke-width="1.0" fill="none"/></svg>
<svg style="left:0;top:0" width="820" height="540" viewBox="0 0 820 540"><path d="M284 85.1H295.2 M287.4 87.6H295.2 M284 90.2H295.2 M287.4 92.7H295.2" stroke="#777" stroke-width="1.0" fill="none"/></svg>
<svg style="left:301.6px;top:58px;" width="15" height="14" viewBox="0 0 15 14"><text transform="translate(3.4,10.2) rotate(-48)" font-size="8.6" font-family="Liberation Sans,sans-serif" fill="#3c3c3c">ab</text><path d="M5 12.4L12.2 5.8M10 5.4L12.4 5.6L12.2 8" stroke="#555" stroke-width="0.9" fill="none"/></svg>
<svg style="left:317.15px;top:64.34px" width="4.5" height="2.52" viewBox="0 0 5 2.8"><path d="M0 0H5L2.5 2.8Z" fill="#666"/></svg>
<div style="left:336.6px;top:56px;width:1px;height:42px;background:#d0d0d0;"></div>
<svg style="left:343.2px;top:57.6px;" width="12" height="14" viewBox="0 0 12 14"><text x="0.3" y="7.6" font-size="8.8" font-family="Liberation Sans,sans-serif" fill="#3c3c3c" letter-spacing="-0.2">ab</text><text x="0.4" y="13.2" font-size="8.8" font-family="Liberation Sans,sans-serif" fill="#3c3c3c">c</text><path d="M9.8 9.4V11.6H6.8M8 10.4L6.8 11.6L8 12.8" stroke="#2e75b6" stroke-width="0.9" fill="none"/></svg>
<svg style="left:302.2px;top:83.2px;" width="13" height="10.6" viewBox="0 0 13 10.6"><path d="M0.2 0.6H12.6M7.2 2.9H12.6M7.2 5.2H12.6M7.2 7.5H12.6M0.2 9.9H12.6" stroke="#8c8c8c" stroke-width="1" fill="none"/><path d="M5.8 5.2H0.8M2.9 2.9L0.6 5.2L2.9 7.5" stroke="#2e75b6" stroke-width="1.4" fill="none"/></svg>
<svg style="left:319.2px;top:83.2px;" width="13" height="10.6" viewBox="0 0 13 10.6"><path d="M0.2 0.6H12.6M7.2 2.9H12.6M7.2 5.2H12.6M7.2 7.5H12.6M0.2 9.9H12.6" stroke="#8c8c8c" stroke-width="1" fill="none"/><path d="M0.4 5.2H5.6M3.5 2.9L5.8 5.2L3.5 7.5" stroke="#2e75b6" stroke-width="1.4" fill="none"/></svg>
<svg style="left:342.5px;top:82.8px;" width="12" height="11.5" viewBox="0 0 12 11.5"><rect x="0.5" y="0.5" width="11" height="10.5" fill="#fff" stroke="#808080" stroke-width="0.9"/><path d="M0.5 3.2H11.5M0.5 8.2H11.5M6 0.5V3.2M6 8.2V11" stroke="#808080" stroke-width="0.8"/><path d="M2 5.7H10M3.2 4.6L2 5.7L3.2 6.8M8.8 4.6L10 5.7L8.8 6.8" stroke="#2e75b6" stroke-width="0.8" fill="none"/></svg>
<svg style="left:358.95px;top:88.14px" width="4.5" height="2.52" viewBox="0 0 5 2.8"><path d="M0 0H5L2.5 2.8Z" fill="#666"/></svg>
<svg style="left:362.7px;top:110.1px;" width="5.6" height="5.6" viewBox="0 0 5.6 5.6"><path d="M0.4 3.4V0.4H3.4" fill="none" stroke="#777" stroke-width="0.8"/><path d="M2 2L5 5M5.2 2.6V5.2H2.6" fill="none" stroke="#777" stroke-width="0.8"/></svg>
<svg style="left:430.45px;top:58.74px" width="4.5" height="2.52" viewBox="0 0 5 2.8"><path d="M0 0H5L2.5 2.8Z" fill="#666"/></svg>
<svg style="left:381px;top:70.3px;" width="13" height="12.8" viewBox="0 0 13 12.8"><rect x="0.6" y="0.6" width="11.6" height="6.6" fill="#fff" stroke="#2e75b6" stroke-width="1.2"/><circle cx="6.4" cy="3.9" r="1.7" fill="#2e75b6"/><path d="M1.2 1.2L3 3M11.6 1.2L9.8 3M1.2 6.6L3 4.8" stroke="#2e75b6" stroke-width="0.8"/><rect x="5.6" y="5.4" width="7" height="7.4" fill="#f3f3f3"/><path d="M6.4 6.6H12.4M6.4 8.6H12.4M4.4 10.6H10.4M4.4 12.4H10.4" stroke="#f0a345" stroke-width="1.4"/></svg>
<svg style="left:397.75px;top:75.74px" width="4.5" height="2.52" viewBox="0 0 5 2.8"><path d="M0 0H5L2.5 2.8Z" fill="#666"/></svg>
<span style="top:71.40px;font-size:11px;color:#4a4a4a;line-height:12px;left:409.2px;letter-spacing:-0.481px;">%</span>
<span style="top:70.93px;font-size:7.4px;color:#4a4a4a;line-height:12px;left:424.8px;letter-spacing:-0.516px;">000</span>
<svg style="left:381px;top:88.8px;" width="12" height="11" viewBox="0 0 12 11"><text x="6.6" y="5.4" font-size="6.6" font-family="Liberation Sans,sans-serif" fill="#444">0</text><text x="1.4" y="10.6" font-size="6.6" font-family="Liberation Sans,sans-serif" fill="#444" letter-spacing="-0.3">,00</text><path d="M6 2.6H1M2.8 0.8L0.8 2.6L2.8 4.4" stroke="#2e75b6" stroke-width="1.2" fill="none"/></svg>
<svg style="left:398px;top:88.8px;" width="12" height="11" viewBox="0 0 12 11"><text x="2.8" y="5.4" font-size="6.6" font-family="Liberation Sans,sans-serif" fill="#444" letter-spacing="-0.3">,00</text><text x="6" y="10.6" font-size="6.6" font-family="Liberation Sans,sans-serif" fill="#444" letter-spacing="-0.3">,0</text><path d="M0.4 8.2H5.2M3.4 6.4L5.4 8.2L3.4 10" stroke="#2e75b6" stroke-width="1.2" fill="none"/></svg>
<svg style="left:434.2px;top:110.1px;" width="5.6" height="5.6" viewBox="0 0 5.6 5.6"><path d="M0.4 3.4V0.4H3.4" fill="none" stroke="#777" stroke-width="0.8"/><path d="M2 2L5 5M5.2 2.6V5.2H2.6" fill="none" stroke="#777" stroke-width="0.8"/></svg>
<svg style="left:453px;top:53px;" width="12.5" height="12.5" viewBox="0 0 12.5 12.5"><rect x="0.4" y="0.4" width="9.6" height="9.2" fill="#fff" stroke="#8a8a8a" stroke-width="0.8"/><path d="M0.4 3.4H10M0.4 6.4H10M5 0.4V9.6" stroke="#9a9a9a" stroke-width="0.7"/><rect x="0.4" y="0.4" width="4.6" height="2.8" fill="#e8501f"/><rect x="0.4" y="3.6" width="3.4" height="2.6" fill="#2e75b6"/><rect x="0.4" y="6.6" width="2.4" height="2.8" fill="#e8501f"/><rect x="5.2" y="5.4" width="6.6" height="6.6" rx="0.8" fill="#fff" stroke="#777" stroke-width="0.9"/><path d="M7 8H10.2M7 9.8H10.2M9.6 6.8L7.8 11" stroke="#666" stroke-width="0.8"/></svg>
<svg style="left:453px;top:70.6px;" width="12.5" height="12.8" viewBox="0 0 12.5 12.8"><rect x="0.4" y="0.4" width="10.4" height="9.4" fill="#fff" stroke="#7a7a7a" stroke-width="0.8"/><rect x="3.8" y="3.4" width="7" height="6.4" fill="#b6d3ee"/><path d="M0.4 3.4H10.8M0.4 6.6H10.8M3.8 0.4V9.8M7.4 0.4V9.8" stroke="#8a8a8a" stroke-width="0.7"/><g transform="translate(3.6000000000000005,4.4) scale(1.15)"><path d="M6.6 0.2L3.4 4.2L4.6 5.2L7.4 1Z" fill="#6a6a6a"/><path d="M3.2 4.4C1.6 4.2 1.6 6.2 0 6.6C1.6 7.6 4.2 7.2 4.6 5.4Z" fill="#2e75b6"/></g></svg>
<svg style="left:453px;top:88px;" width="12.5" height="12.8" viewBox="0 0 12.5 12.8"><rect x="0.4" y="0.4" width="10.8" height="9.6" fill="#fff" stroke="#7a7a7a" stroke-width="0.8"/><rect x="2.6" y="2.6" width="6.6" height="5" fill="#b6d3ee"/><path d="M0.4 2.4H11.2M2.4 0.4V10" stroke="#8a8a8a" stroke-width="0.7"/><g transform="translate(3.6000000000000005,4.4) scale(1.15)"><path d="M6.6 0.2L3.4 4.2L4.6 5.2L7.4 1Z" fill="#6a6a6a"/><path d="M3.2 4.4C1.6 4.2 1.6 6.2 0 6.6C1.6 7.6 4.2 7.2 4.6 5.4Z" fill="#2e75b6"/></g></svg>
<svg style="left:585.75px;top:58.54px" width="4.5" height="2.52" viewBox="0 0 5 2.8"><path d="M0 0H5L2.5 2.8Z" fill="#666"/></svg>
<svg style="left:587.75px;top:75.94px" width="4.5" height="2.52" viewBox="0 0 5 2.8"><path d="M0 0H5L2.5 2.8Z" fill="#666"/></svg>
<svg style="left:520.75px;top:93.54px" width="4.5" height="2.52" viewBox="0 0 5 2.8"><path d="M0 0H5L2.5 2.8Z" fill="#666"/></svg>
<svg style="left:611.5px;top:53px;" width="13" height="12.5" viewBox="0 0 13 12.5"><path d="M0.5 0.5H7.5V3.1H0.5ZM0.5 9.3H7.5V12H0.5ZM0.5 6.4H7.5V9.3H0.5ZM4 0.5V3.1M4 6.4V12" fill="#fff" stroke="#7a7a7a" stroke-width="0.8"/><rect x="5.6" y="3.5" width="6.6" height="2.6" fill="#b6d3ee" stroke="#7a7a7a" stroke-width="0.8"/><path d="M9 3.5V6.1" stroke="#7a7a7a" stroke-width="0.7"/><path d="M5 4.8H0.8M2.6 3L0.6 4.8L2.6 6.6" stroke="#2e75b6" stroke-width="1.2" fill="none"/></svg>
<svg style="left:611.5px;top:70.4px;" width="13" height="12.5" viewBox="0 0 13 12.5"><path d="M0.5 0.5H7.5V3.1H0.5ZM0.5 9.3H7.5V12H0.5ZM0.5 6.4H7.5V9.3H0.5ZM4 0.5V3.1M4 6.4V12" fill="#fff" stroke="#7a7a7a" stroke-width="0.8"/><rect x="2.6" y="3.6" width="3.4" height="2.6" fill="#b6d3ee" stroke="#7a7a7a" stroke-width="0.7"/><path d="M6.8 2.8L12 8M12 2.8L6.8 8" stroke="#e8423a" stroke-width="1.2"/></svg>
<svg style="left:611.5px;top:88px;" width="12" height="12" viewBox="0 0 12 12"><path d="M0.6 1.6H10.8M0.6 0.2V3M10.8 0.2V3M2.2 0.4L0.8 1.6L2.2 2.8M9.2 0.4L10.6 1.6L9.2 2.8" stroke="#2e75b6" stroke-width="0.9" fill="none"/><rect x="0.5" y="3.6" width="10.4" height="7.8" fill="#fff" stroke="#7a7a7a" stroke-width="0.8"/><path d="M3.6 3.6V11.4M7.8 3.6V11.4M0.5 5.6H10.9M0.5 9.4H10.9" stroke="#7a7a7a" stroke-width="0.7"/><rect x="3.6" y="5.6" width="4.2" height="3.8" fill="#2e75b6"/></svg>
<svg style="left:669.75px;top:58.64px" width="4.5" height="2.52" viewBox="0 0 5 2.8"><path d="M0 0H5L2.5 2.8Z" fill="#666"/></svg>
<svg style="left:666.75px;top:75.94px" width="4.5" height="2.52" viewBox="0 0 5 2.8"><path d="M0 0H5L2.5 2.8Z" fill="#666"/></svg>
<svg style="left:660.95px;top:93.54px" width="4.5" height="2.52" viewBox="0 0 5 2.8"><path d="M0 0H5L2.5 2.8Z" fill="#666"/></svg>
<svg style="left:696px;top:53px;" width="12.5" height="12" viewBox="0 0 12.5 12"><path d="M11.4 3V0.8H0.8L6.4 6L0.8 11.2H11.6V9" fill="none" stroke="#484848" stroke-width="1.5" stroke-linejoin="miter"/></svg>
<svg style="left:712.45px;top:58.44px" width="4.5" height="2.52" viewBox="0 0 5 2.8"><path d="M0 0H5L2.5 2.8Z" fill="#666"/></svg>
<svg style="left:723px;top:52.6px;" width="13" height="13.4" viewBox="0 0 13 13.4"><text x="0.2" y="5.8" font-size="7" font-weight="bold" font-family="Liberation Sans,sans-serif" fill="#2e75b6">А</text><text x="0.3" y="12.9" font-size="7" font-weight="bold" font-family="Liberation Sans,sans-serif" fill="#9b4fb0">Я</text><path d="M6.2 4.4H12.2L10 7V9.8H8.4V7Z" fill="#555"/></svg>
<svg style="left:737.45px;top:58.44px" width="4.5" height="2.52" viewBox="0 0 5 2.8"><path d="M0 0H5L2.5 2.8Z" fill="#666"/></svg>
<svg style="left:696.8px;top:70.6px;" width="11.4" height="12.4" viewBox="0 0 11.4 12.4"><rect x="0.5" y="0.5" width="10.4" height="11.4" fill="#fff" stroke="#777" stroke-width="0.9"/><rect x="0.5" y="0.5" width="10.4" height="2.6" fill="#8a8a8a"/><path d="M5.7 4.4V10M3.2 7.6L5.7 10.2L8.2 7.6" stroke="#2e75b6" stroke-width="1.4" fill="none"/></svg>
<svg style="left:710.95px;top:75.84px" width="4.5" height="2.52" viewBox="0 0 5 2.8"><path d="M0 0H5L2.5 2.8Z" fill="#666"/></svg>
<svg style="left:723.4px;top:71.6px;" width="11" height="11" viewBox="0 0 11 11"><g transform="scale(1.0)"><circle cx="6.9" cy="3.9" r="3.1" fill="#fff" stroke="#2e75b6" stroke-width="1.3"/><path d="M4.7 6.2L0.8 10.2" stroke="#2e75b6" stroke-width="1.7" stroke-linecap="round"/></g></svg>
<svg style="left:737.45px;top:75.84px" width="4.5" height="2.52" viewBox="0 0 5 2.8"><path d="M0 0H5L2.5 2.8Z" fill="#666"/></svg>
<svg style="left:696.6px;top:89px;" width="11" height="10" viewBox="0 0 11 10"><path d="M0.6 6.6L6.8 0.6L10.2 3.4L4 9.4Z" fill="#f57f8f"/><path d="M2.2 5L5.6 7.9" stroke="#fff" stroke-width="0.8"/></svg>
<svg style="left:710.95px;top:93.14px" width="4.5" height="2.52" viewBox="0 0 5 2.8"><path d="M0 0H5L2.5 2.8Z" fill="#666"/></svg>
<svg style="left:804px;top:110.4px;" width="8" height="5" viewBox="0 0 8 5"><path d="M0.8 4.2L4 1L7.2 4.2" fill="none" stroke="#4a4a4a" stroke-width="1.6"/></svg>
<svg style="left:70.8px;top:134.8px" width="5" height="2.8" viewBox="0 0 5 2.8"><path d="M0 0H5L2.5 2.8Z" fill="#666"/></svg>
<svg style="left:91.6px;top:133px;" width="2" height="8" viewBox="0 0 2 8"><rect x="0.5" y="0.6" width="1" height="1" fill="#a6a6a6"/><rect x="0.5" y="2.6" width="1" height="1" fill="#a6a6a6"/><rect x="0.5" y="4.6" width="1" height="1" fill="#a6a6a6"/><rect x="0.5" y="6.6" width="1" height="1" fill="#a6a6a6"/></svg>
<svg style="left:114px;top:133.6px;" width="8.4" height="8" viewBox="0 0 8.4 8"><path d="M0.6 0.6L7.6 7.4M7.6 0.6L0.6 7.4" stroke="#b4b4b4" stroke-width="1.1"/></svg>
<svg style="left:141.2px;top:133.4px;" width="10" height="8.4" viewBox="0 0 10 8.4"><path d="M0.6 4.8L3.4 7.6L9.2 0.8" fill="none" stroke="#b4b4b4" stroke-width="1.2"/></svg>
<span style="left:169.6px;top:131.4px;font-family:'Liberation Serif',serif;font-style:italic;font-size:10.5px;line-height:12px;color:#666;letter-spacing:-0.4px">f<span style="position:static;display:inline;font-size:7.5px;font-weight:bold">x</span></span>
<svg style="left:805px;top:134px;" width="7" height="5" viewBox="0 0 7 5"><path d="M0.8 0.8L3.5 3.6L6.2 0.8" fill="none" stroke="#4a4a4a" stroke-width="1.5"/></svg>
<svg style="left:84.15px;top:164.54px" width="4.5" height="2.52" viewBox="0 0 5 2.8"><path d="M0 0H5L2.5 2.8Z" fill="#666"/></svg>
<svg style="left:119.05px;top:164.54px" width="4.5" height="2.52" viewBox="0 0 5 2.8"><path d="M0 0H5L2.5 2.8Z" fill="#666"/></svg>
<svg style="left:131px;top:160.4px;" width="11" height="10" viewBox="0 0 11 10"><g transform="scale(1.0)"><path d="M0.5 9.4L3.9 1.4H4.5L7.9 9.4M1.8 6.6H6.6" fill="none" stroke="#5a5a5a" stroke-width="1.15"/><path d="M6.6 2.6L8.6 0.2L10.6 2.6Z" fill="#2e75b6"/></g></svg>
<svg style="left:149px;top:160.4px;" width="11" height="10" viewBox="0 0 11 10"><g transform="scale(1.0)"><path d="M0.6 9.4L3.2 3.2H3.8L6.4 9.4M1.6 7.2H5.4" fill="none" stroke="#5a5a5a" stroke-width="1.1"/><path d="M5.8 0.2H9.8L7.8 2.6Z" fill="#2e75b6"/></g></svg>
<svg style="left:162.6px;top:159.2px;" width="13" height="12.8" viewBox="0 0 13 12.8"><rect x="0.6" y="0.6" width="11.6" height="6.6" fill="#fff" stroke="#2e75b6" stroke-width="1.2"/><circle cx="6.4" cy="3.9" r="1.7" fill="#2e75b6"/><path d="M1.2 1.2L3 3M11.6 1.2L9.8 3M1.2 6.6L3 4.8" stroke="#2e75b6" stroke-width="0.8"/><rect x="5.6" y="5.4" width="7" height="7.4" fill="#f3f3f3"/><path d="M6.4 6.6H12.4M6.4 8.6H12.4M4.4 10.6H10.4M4.4 12.4H10.4" stroke="#f0a345" stroke-width="1.4"/></svg>
<svg style="left:178.95px;top:164.34px" width="4.5" height="2.52" viewBox="0 0 5 2.8"><path d="M0 0H5L2.5 2.8Z" fill="#666"/></svg>
<span style="top:159.60px;font-size:11px;color:#4a4a4a;line-height:12px;left:190.2px;letter-spacing:-0.481px;">%</span>
<span style="top:159.33px;font-size:7.4px;color:#4a4a4a;line-height:12px;left:206px;letter-spacing:-0.516px;">000</span>
<svg style="left:221.6px;top:159.8px;" width="12" height="11.5" viewBox="0 0 12 11.5"><rect x="0.5" y="0.5" width="11" height="10.5" fill="#fff" stroke="#808080" stroke-width="0.9"/><path d="M0.5 3.2H11.5M0.5 8.2H11.5M6 0.5V3.2M6 8.2V11" stroke="#808080" stroke-width="0.8"/><path d="M2 5.7H10M3.2 4.6L2 5.7L3.2 6.8M8.8 4.6L10 5.7L8.8 6.8" stroke="#2e75b6" stroke-width="0.8" fill="none"/></svg>
<span style="top:177.65px;font-size:9.5px;color:#3b3b3b;line-height:12px;font-weight:bold;left:46.7px;letter-spacing:0.814px;">Ж</span>
<span style="top:177.65px;font-size:9.5px;color:#3b3b3b;line-height:12px;font-weight:bold;font-style:italic;left:64px;letter-spacing:0.560px;">К</span>
<svg style="left:0;top:0" width="820" height="540" viewBox="0 0 820 540"><path d="M79.4 180H90 M81.4 182.6H88 M79.4 185.2H90 M81.4 187.8H88" stroke="#777" stroke-width="1.0" fill="none"/></svg>
<svg style="left:95.6px;top:178.4px;" width="13" height="12.5" viewBox="0 0 13 12.5"><path d="M4.2 2.2L8.8 5.6L6 8.6H3.6L1.4 5.6Z" fill="#fff" stroke="#5f5f5f" stroke-width="0.9"/><path d="M4.1 0.4V3.8H6V0.4Z" fill="#fff" stroke="#5f5f5f" stroke-width="0.8"/><path d="M9.4 3.6C10.9 4.6 11 6.6 10 8.2C9.8 6.8 9.4 6 8.8 5.6Z" fill="#2e75b6"/><rect x="0" y="9.2" width="12.4" height="3" fill="#ffff00"/></svg>
<svg style="left:112.15px;top:183.14px" width="4.5" height="2.52" viewBox="0 0 5 2.8"><path d="M0 0H5L2.5 2.8Z" fill="#666"/></svg>
<svg style="left:121.5px;top:179.4px;" width="12.4" height="11.5" viewBox="0 0 12.4 11.5"><path d="M2.8 7.2L5.9 0.5H6.5L9.6 7.2M4 5H8.4" fill="none" stroke="#5a5a5a" stroke-width="1.1"/><rect x="0" y="8.2" width="12.2" height="3" fill="#f0141e"/></svg>
<svg style="left:137.75px;top:183.14px" width="4.5" height="2.52" viewBox="0 0 5 2.8"><path d="M0 0H5L2.5 2.8Z" fill="#666"/></svg>
<svg style="left:148px;top:178.6px;" width="11" height="10.5" viewBox="0 0 11 10.5"><path d="M0.5 0.5H10.5M0.5 5H10.5M0.5 0.5V9.5M5.5 0.5V9.5M10.5 0.5V9.5" stroke="#9a9a9a" stroke-width="0.9" stroke-dasharray="1.2 1" fill="none"/><path d="M0 9.9H11" stroke="#666" stroke-width="1.1"/></svg>
<svg style="left:163.75px;top:183.14px" width="4.5" height="2.52" viewBox="0 0 5 2.8"><path d="M0 0H5L2.5 2.8Z" fill="#666"/></svg>
<svg style="left:172.6px;top:178.6px;" width="12" height="11" viewBox="0 0 12 11"><text x="6.6" y="5.4" font-size="6.6" font-family="Liberation Sans,sans-serif" fill="#444">0</text><text x="1.4" y="10.6" font-size="6.6" font-family="Liberation Sans,sans-serif" fill="#444" letter-spacing="-0.3">,00</text><path d="M6 2.6H1M2.8 0.8L0.8 2.6L2.8 4.4" stroke="#2e75b6" stroke-width="1.2" fill="none"/></svg>
<svg style="left:190px;top:178.6px;" width="12" height="11" viewBox="0 0 12 11"><text x="2.8" y="5.4" font-size="6.6" font-family="Liberation Sans,sans-serif" fill="#444" letter-spacing="-0.3">,00</text><text x="6" y="10.6" font-size="6.6" font-family="Liberation Sans,sans-serif" fill="#444" letter-spacing="-0.3">,0</text><path d="M0.4 8.2H5.2M3.4 6.4L5.4 8.2L3.4 10" stroke="#2e75b6" stroke-width="1.2" fill="none"/></svg>
<svg style="left:206.4px;top:178.2px;" width="12.5" height="11.5" viewBox="0 0 12.5 11.5"><g transform="scale(1.0)"><path d="M0.6 6.6L4.2 3.6L8 8L3.6 11Z" fill="#f3c580"/><path d="M4.2 3.6L5.6 2.5L9.2 6.8L8 8Z" fill="#9a9a9a"/><path d="M6.9 3.6L10.6 0.6L12 2.2L8.4 5.3Z" fill="#666"/></g></svg>
<svg style="left:45px;top:212px;" width="12" height="11.4" viewBox="0 0 12 11.4"><path d="M3.2 0.4L7.4 7.4M8.8 0.4L4.6 7.4" stroke="#555" stroke-width="1.05" fill="none"/><circle cx="2.9" cy="9" r="1.9" fill="none" stroke="#2e75b6" stroke-width="1.05"/><circle cx="9.1" cy="9" r="1.9" fill="none" stroke="#2e75b6" stroke-width="1.05"/></svg>
<svg style="left:45px;top:231.2px;" width="12" height="11" viewBox="0 0 12 11"><path d="M0.5 0.5H4.2L5.9 2.2V8H0.5Z" fill="#fff" stroke="#6e6e6e" stroke-width="0.9"/><path d="M1.7 3H4.6M1.7 4.6H4.6M1.7 6.2H4.6" stroke="#2e75b6" stroke-width="0.8"/><path d="M5.2 3H9.2L11.4 5.2V10.4H5.2Z" fill="#fff" stroke="#6e6e6e" stroke-width="0.9"/><path d="M6.5 6H10M6.5 7.5H10M6.5 9H10" stroke="#2e75b6" stroke-width="0.8"/></svg>
<svg style="left:45.4px;top:247.6px;" width="11.88" height="12.96" viewBox="0 0 11.88 12.96"><g transform="scale(0.54)"><rect x="0.7" y="2.9" width="18.2" height="18.5" rx="0.8" fill="#f3c580"/><path d="M4.5 5.6V3.2H7.4V1.6A0.9 0.9 0 0 1 8.3 0.7H11.3A0.9 0.9 0 0 1 12.2 1.6V3.2H15.1V5.6Z" fill="#6e6e6e"/><rect x="8.7" y="1.6" width="2.2" height="1.2" fill="#f3f3f3"/><path d="M10.6 9.3H17.4L21.3 13.2V23.4H10.6Z" fill="#fff" stroke="#7a7a7a" stroke-width="0.9"/><path d="M17.4 9.3V13.2H21.3" fill="none" stroke="#7a7a7a" stroke-width="0.9"/></g></svg>
<svg style="left:64.2px;top:264.8px;" width="17.6" height="19.2" viewBox="0 0 17.6 19.2"><g transform="scale(0.8)"><rect x="0.7" y="2.9" width="18.2" height="18.5" rx="0.8" fill="#f3c580"/><path d="M4.5 5.6V3.2H7.4V1.6A0.9 0.9 0 0 1 8.3 0.7H11.3A0.9 0.9 0 0 1 12.2 1.6V3.2H15.1V5.6Z" fill="#6e6e6e"/><rect x="8.7" y="1.6" width="2.2" height="1.2" fill="#f3f3f3"/><path d="M10.6 9.3H17.4L21.3 13.2V23.4H10.6Z" fill="#fff" stroke="#7a7a7a" stroke-width="0.9"/><path d="M17.4 9.3V13.2H21.3" fill="none" stroke="#7a7a7a" stroke-width="0.9"/></g></svg>
<svg style="left:44.8px;top:309px;" width="12" height="11.4" viewBox="0 0 12 11.4"><circle cx="7.4" cy="4.4" r="3.7" fill="#fff" stroke="#2e75b6" stroke-width="1.2"/><path d="M4.6 7.2L0.9 10.6" stroke="#2e75b6" stroke-width="1.8" stroke-linecap="round"/><path d="M7.4 3.8V6.4" stroke="#555" stroke-width="1"/><rect x="6.9" y="2" width="1" height="1" fill="#555"/></svg>
<svg style="left:45.2px;top:384px;" width="11.6" height="11.8" viewBox="0 0 11.6 11.8"><rect x="2.6" y="1.6" width="8.4" height="9.6" fill="#fff" stroke="#666" stroke-width="0.9"/><path d="M4.2 4.4H9.4" stroke="#e8501f" stroke-width="1.3"/><path d="M4.2 6.6H8.4" stroke="#2e75b6" stroke-width="1.3"/><path d="M4.2 8.8H9.4" stroke="#3a9a5c" stroke-width="1.3"/><path d="M3.6 0L0.6 4.4H2.6L1.4 7.6L4.8 2.8H2.8Z" fill="#f0a345"/></svg>
<svg style="left:44.6px;top:440.4px;" width="12" height="11" viewBox="0 0 12 11"><path d="M4.6 1.8H11V7.4H5.4L3.2 9.8V7.4H2V5.4" fill="none" stroke="#777" stroke-width="0.9"/><path d="M2.2 0.2V4.6M0 2.4H4.4" stroke="#2b9a5b" stroke-width="1.1"/></svg>
<svg style="left:45.2px;top:459.4px;" width="11.6" height="12.6" viewBox="0 0 11.6 12.6"><rect x="0.5" y="0.5" width="10.4" height="11.4" fill="#fff" stroke="#6a6a6a" stroke-width="0.9"/><rect x="0.5" y="0.5" width="10.4" height="2.4" fill="#2e75b6"/><rect x="2.4" y="4.8" width="1.6" height="1.6" fill="#666"/><rect x="2.4" y="8" width="1.6" height="1.6" fill="#666"/><path d="M5.4 5.6H8.8M5.4 8.8H8.8" stroke="#666" stroke-width="1"/></svg>
<svg style="left:44.6px;top:514.2px;" width="13" height="12.6" viewBox="0 0 13 12.6"><path d="M2.2 6.4A4.4 4.6 0 0 1 11 6.4M2 6.4H11.2M2.8 3.6H10.4M6.6 1.6V6.4" fill="none" stroke="#777" stroke-width="0.9"/><rect x="0.9" y="8" width="6.4" height="3.6" rx="1.8" fill="none" stroke="#2e75b6" stroke-width="1.3"/><rect x="5.6" y="8" width="6.4" height="3.6" rx="1.8" fill="none" stroke="#2e75b6" stroke-width="1.3"/></svg>
<svg style="left:808px;top:159.4px;" width="6" height="4" viewBox="0 0 6 4"><path d="M0.2 3.6L3 0.4L5.8 3.6Z" fill="#777"/></svg>
<svg style="left:808px;top:495.4px;" width="6" height="4" viewBox="0 0 6 4"><path d="M0.2 0.4L3 3.6L5.8 0.4Z" fill="#777"/></svg>
<svg style="left:508.4px;top:510px;" width="4" height="6" viewBox="0 0 4 6"><path d="M3.6 0.2L0.4 3L3.6 5.8Z" fill="#666"/></svg>
<svg style="left:797.2px;top:510px;" width="4" height="6" viewBox="0 0 4 6"><path d="M0.4 0.2L3.6 3L0.4 5.8Z" fill="#666"/></svg>
<svg style="left:20.4px;top:509px;" width="4" height="6.4" viewBox="0 0 4 6.4"><path d="M3.6 0.2L0.4 3.2L3.6 6.2Z" fill="#c0c0c0"/></svg>
<svg style="left:491.6px;top:508.6px;" width="2" height="8" viewBox="0 0 2 8"><rect x="0.5" y="0.4" width="1" height="1" fill="#a6a6a6"/><rect x="0.5" y="2.6" width="1" height="1" fill="#a6a6a6"/><rect x="0.5" y="4.8" width="1" height="1" fill="#a6a6a6"/><rect x="0.5" y="7" width="1" height="1" fill="#a6a6a6"/></svg>
<div style="left:10.8px;top:194px;width:61.4px;height:26.4px;border:2.9px solid #fb0a10;border-radius:7.5px"></div>
<div style="left:60.2px;top:321.3px;width:61.5px;height:25.9px;border:2.9px solid #fb0a10;border-radius:7.5px"></div>
<div style="left:0px;top:0px;width:820px;height:1px;background:#6f6f6f;"></div>
<div style="left:0px;top:0px;width:1px;height:540px;background:#7d7d7d;"></div>
<div style="left:819px;top:0px;width:1px;height:540px;background:#5f5f5f;"></div>
<div style="left:0px;top:538px;width:820px;height:2px;background:#7d7d7d;"></div>
</div></body></html>
